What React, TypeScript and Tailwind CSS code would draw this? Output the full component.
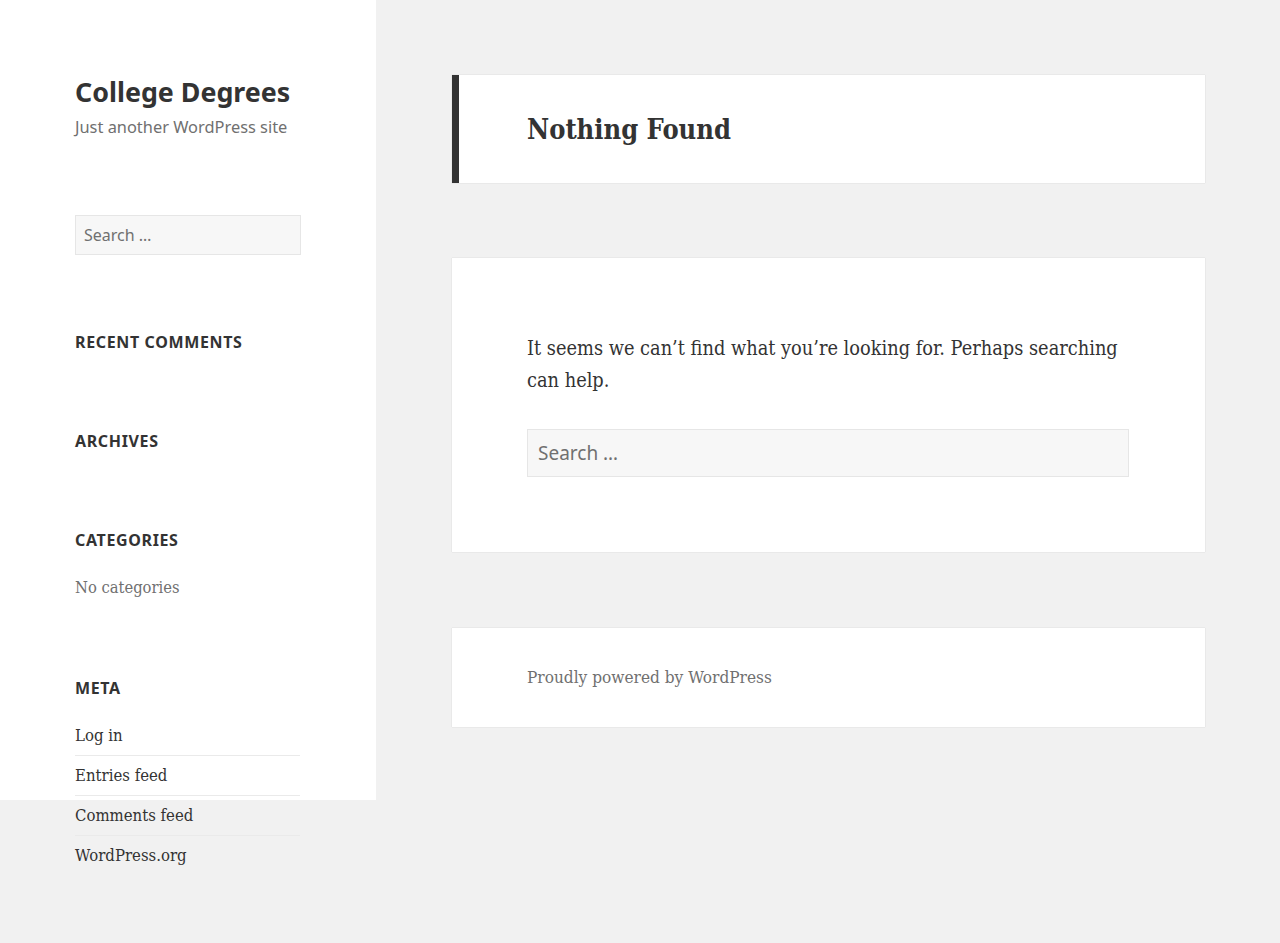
import React from "react";

const sans = "font-['Noto_Sans',sans-serif]";
const serif = "font-['DejaVu_Serif_Condensed','Liberation_Serif',serif]";

function SearchBox({ big }: { big?: boolean }) {
  return (
    <input
      type="search"
      placeholder="Search …"
      className={
        big
          ? `${sans} block h-[48px] w-full border border-[#e6e6e6] bg-[#f7f7f7] px-[10px] text-[19px] text-[#707070] outline-none placeholder:text-[#707070]`
          : `${sans} block h-[40px] w-full border border-[#e6e6e6] bg-[#f7f7f7] px-[8px] text-[16px] text-[#707070] outline-none placeholder:text-[#707070]`
      }
    />
  );
}

function WidgetTitle({ children }: { children: React.ReactNode }) {
  return (
    <h2 className={`${sans} text-[16px] font-bold uppercase leading-[24px] tracking-[0.04em] text-[#333]`}>{children}</h2>
  );
}

const metaLinks = ["Log in", "Entries feed", "Comments feed", "WordPress.org"];

export default function App() {
  return (
    <div className="flex min-h-[943px] w-full bg-[#f1f1f1]">
      <aside className="h-[800px] w-[376px] shrink-0 bg-white">
        <div className="w-[301px] pl-[75px] pt-[74px]">
          <h1 className={`${sans} whitespace-nowrap text-[26.8px] font-bold leading-[35px] text-[#333]`}>College Degrees</h1>
          <p className={`${sans} mt-[6px] text-[16.4px] leading-[24px] text-[#707070]`}>Just another WordPress site</p>

          <div className="mt-[76px]">
            <SearchBox />
          </div>

          <div className="mt-[75px]">
            <WidgetTitle>Recent Comments</WidgetTitle>
          </div>

          <div className="mt-[75px]">
            <WidgetTitle>Archives</WidgetTitle>
          </div>

          <div className="mt-[75px]">
            <WidgetTitle>Categories</WidgetTitle>
            <p className={`${serif} mt-[24px] text-[16.4px] leading-[24px] text-[#707070]`}>No categories</p>
          </div>

          <div className="mt-[76px]">
            <WidgetTitle>Meta</WidgetTitle>
            <ul className="mt-[24px] w-[225px]">
              {metaLinks.map((l, i) => (
                <li
                  key={l}
                  className={`${serif} text-[16.6px] leading-[24px] text-[#333] ${
                    i === 0 ? "pb-[7px]" : "border-t border-[#eaeaea] pb-[7px] pt-[8px]"
                  }`}
                >
                  {l}
                </li>
              ))}
            </ul>
          </div>
        </div>
      </aside>

      <main className="ml-[76px] mr-[75px] flex-1 pt-[75px]">
        <header className="border-l-[7px] border-[#333] bg-white pb-[35px] pl-[68px] pr-[76px] pt-[37px] shadow-[0_0_1px_rgba(0,0,0,0.2)]">
          <h1 className={`${serif} text-[27px] font-bold leading-[36px] text-[#333]`}>Nothing Found</h1>
        </header>

        <section className="mt-[75px] bg-white pb-[75px] pl-[75px] pr-[76px] pt-[75px] shadow-[0_0_1px_rgba(0,0,0,0.2)]">
          <p className={`${serif} text-[19.8px] leading-[32px] text-[#333]`}>
            It seems we can’t find what you’re looking for. Perhaps searching can help.
          </p>
          <div className="mt-[32px]">
            <SearchBox big />
          </div>
        </section>

        <footer className="mt-[76px] bg-white py-[38px] pl-[75px] shadow-[0_0_1px_rgba(0,0,0,0.2)]">
          <p className={`${serif} text-[17.1px] leading-[23px] text-[#707070]`}>Proudly powered by WordPress</p>
        </footer>
      </main>
    </div>
  );
}
